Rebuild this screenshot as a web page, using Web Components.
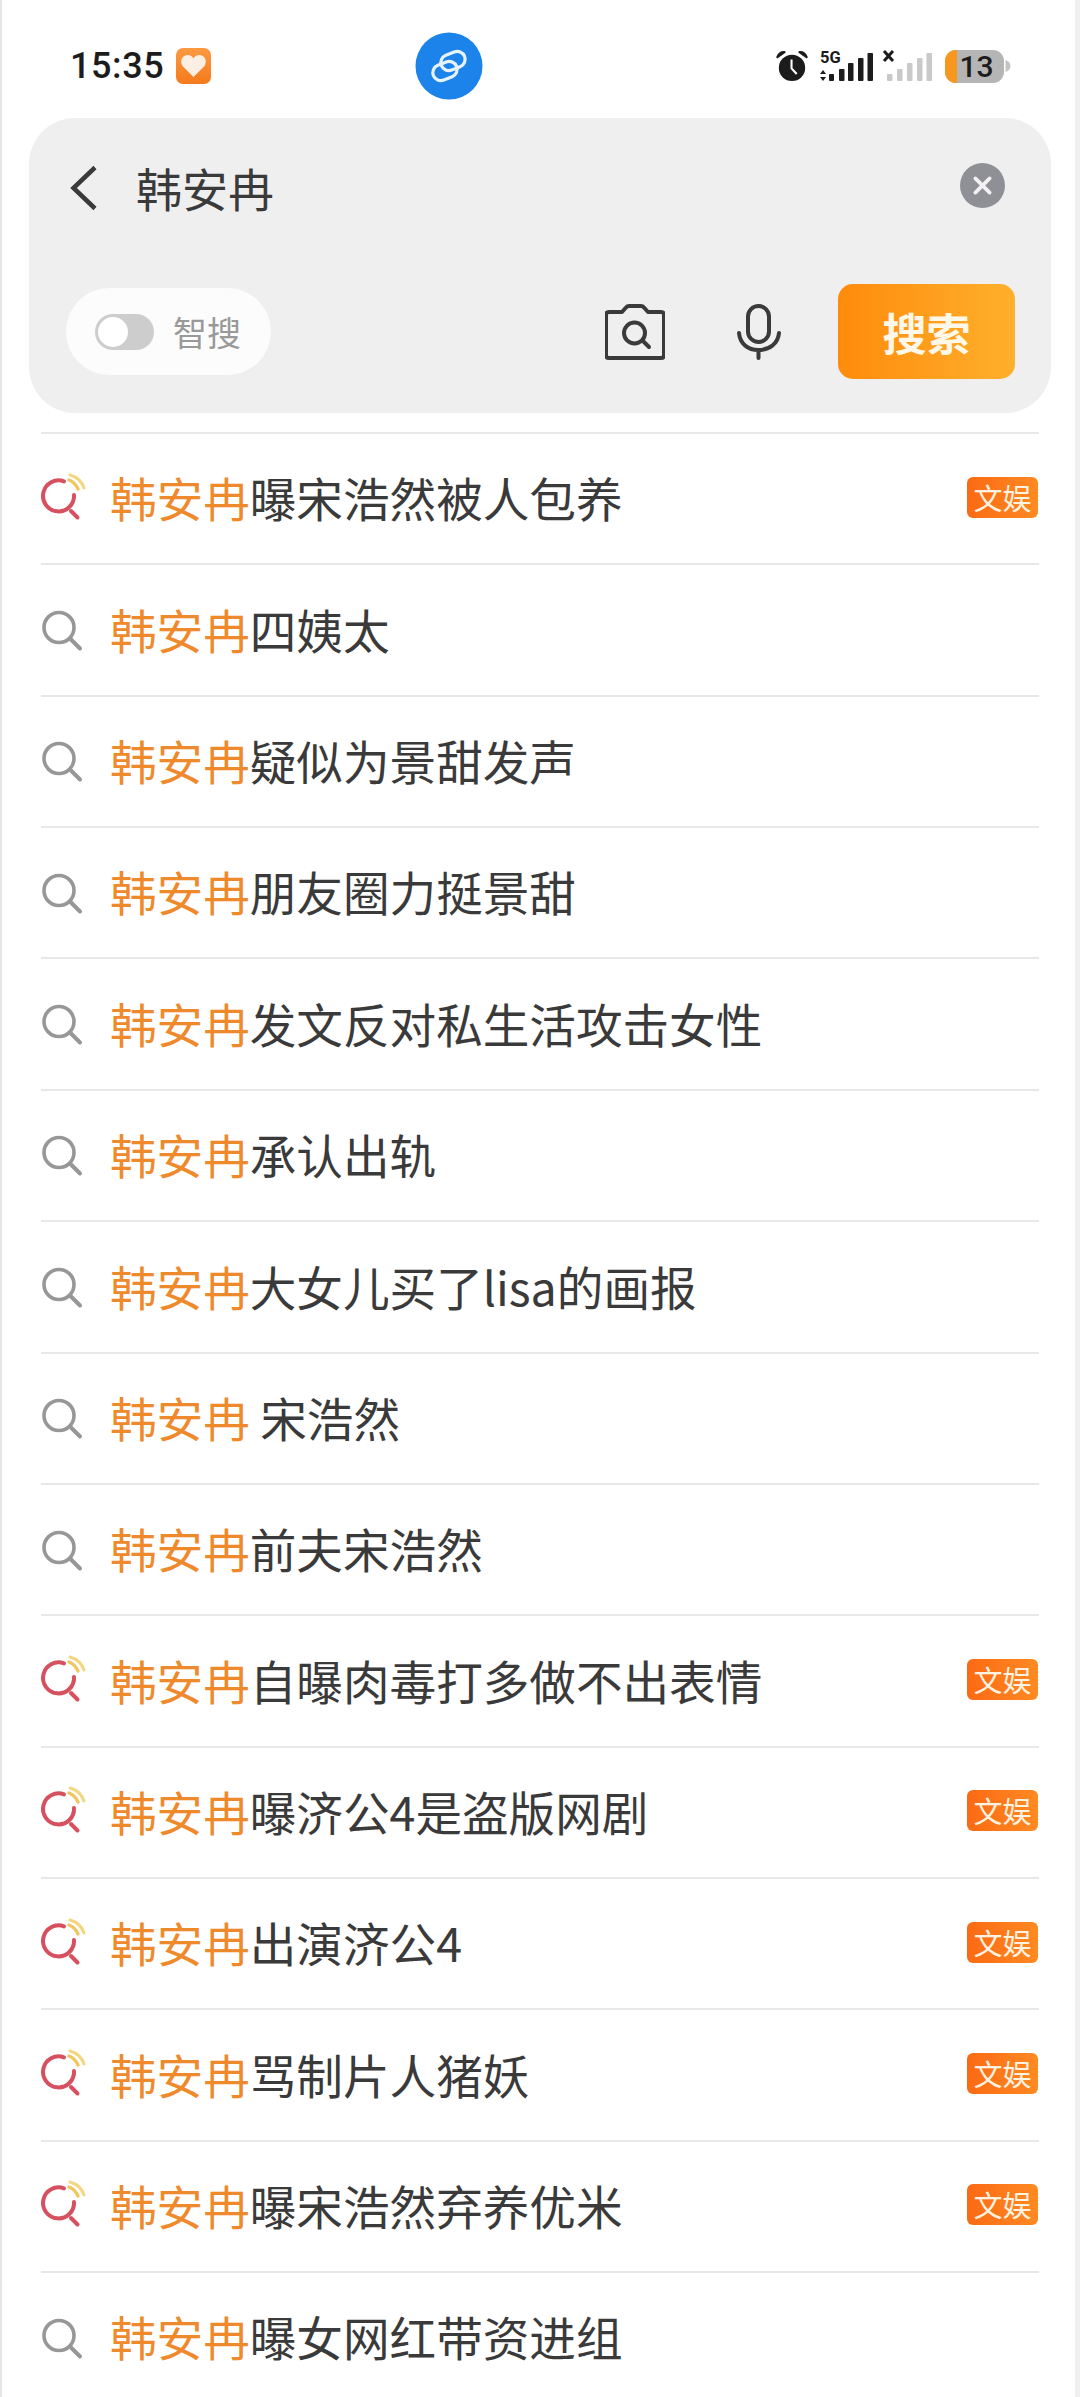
<!DOCTYPE html>
<html><head><meta charset="utf-8">
<style>
html,body{margin:0;padding:0;background:#fff}
body{width:1080px;height:2397px;overflow:hidden;font-family:"Noto Sans CJK SC","Noto Sans",sans-serif;box-sizing:border-box;border-left:2px solid #e6e6e6;border-right:5px solid #f0f0f0;}
</style></head><body>
<template id="t-status"><style>
:host{display:flex;align-items:center;height:118px;box-sizing:border-box;padding:14px 0 0 68px;color:#1c1c1c}
.time{font:500 36px/1 Roboto,"Noto Sans",sans-serif;letter-spacing:.6px}
.left{display:flex;align-items:center;gap:12px;width:345px}
.center{display:flex}
.right{margin-left:auto;display:flex;align-items:center;margin-right:64px}
.bat{position:relative;width:59px;height:33px;border-radius:11px;background:#b5b5b5;display:flex;align-items:center;justify-content:center;font:500 30px/33px Roboto,sans-serif;margin-left:13px}
.bat i{position:absolute;left:0;top:0;bottom:0;width:12px;background:#f7971e;border-radius:11px 0 0 11px}
.bat span{position:relative;margin-left:4px}
svg{display:block}
</style>
<div class="left"><span class="time">15:35</span>
<svg width="36" height="36" viewBox="0 0 36 36"><defs><linearGradient id="h" x1="0" y1="0" x2="0" y2="1"><stop offset="0" stop-color="#fc9a42"/><stop offset="1" stop-color="#f47a1c"/></linearGradient></defs><rect width="35" height="36" rx="7" fill="url(#h)"/><path d="M17.500 29 6.500 18C3 12 7 7 11.500 7c3 0 5 1.500 6 3.500C18.500 8.500 20.500 7 23.500 7c4.500 0 8.500 5 5 11Z" fill="#fbeee3"/></svg></div>
<div class="center"><svg width="68" height="68" viewBox="0 0 68 68"><circle cx="34" cy="34" r="33.500" fill="#1b83ea"/><g fill="none" stroke="#e6f2fd" stroke-width="3.200"><rect x="17.500" y="31" width="25" height="16" rx="8" transform="rotate(-22 30 39)"/><rect x="25.500" y="21" width="25" height="16" rx="8" transform="rotate(-22 38 29)"/></g></svg></div>
<div class="right">
<svg width="32" height="32" viewBox="0 0 34 34" fill="#1c1c1c"><circle cx="17" cy="19" r="14"/><path d="M1.500 7.500C3 3.500 6 2 9 2.200ZM32.500 7.500C31 3.500 28 2 25 2.200Z" stroke="#1c1c1c" stroke-width="2.400" stroke-linejoin="round"/><path d="M16.500 10v9.500l5.500 6" fill="none" stroke="#fff" stroke-width="2.200"/></svg>
<svg width="54" height="34" viewBox="0 0 54 34" style="margin-left:12px" fill="#1c1c1c"><text x="0" y="14" font-family="Roboto,sans-serif" font-size="16.500" font-weight="700" fill="#1c1c1c">5G</text><path d="M3 21l3 4H0ZM3 32l3-4H0Z"/><rect x="9" y="25" width="5" height="7" rx="1"/><rect x="19" y="20" width="5.500" height="12" rx="1"/><rect x="28" y="14" width="5.500" height="18" rx="1"/><rect x="38" y="9" width="5.500" height="23" rx="1"/><rect x="47.500" y="4" width="5.500" height="28" rx="1"/></svg>
<svg width="51" height="34" viewBox="0 0 51 34" style="margin-left:7px"><path d="M3 2l9 10M12 2 3 12" stroke="#1c1c1c" stroke-width="3" fill="none"/><g fill="#c9c9c9"><rect x="6" y="25" width="5.500" height="7" rx="1"/><rect x="16" y="20" width="5.500" height="12" rx="1"/><rect x="26" y="14" width="5.500" height="18" rx="1"/><rect x="36" y="9" width="5.500" height="23" rx="1"/><rect x="45.500" y="4" width="5.500" height="28" rx="1"/></g></svg>
<div class="bat"><i></i><span>13</span></div>
<svg width="6" height="12" viewBox="0 0 5 12" style="margin-left:1px"><path d="M0 0c3 1 5 3 5 6s-2 5-5 6Z" fill="#c4c4c4"/></svg>
</div></template>

<template id="t-box"><style>
:host{display:block;margin:0 24px 0 27px;height:295px;background:#efefef;border-radius:46px;box-sizing:border-box;padding:0 36px 0 37px;color:#3a3a3a}
.top{display:flex;align-items:center;height:134px;padding-right:10px}
.q{font-size:46px;line-height:1;margin-left:37.500px;flex:1;color:#3a3a3a;position:relative;top:2px}
.back{margin-left:2.500px;flex:none;position:relative;top:3px}
.bot{display:flex;align-items:center;height:95px;margin-top:32px}
.pill{display:flex;align-items:center;width:205px;height:87px;border-radius:44px;background:#fcfcfc;box-sizing:border-box;padding-left:29px}
.tog{width:59px;height:36px;border-radius:18px;background:#cdcdcd;position:relative}
.tog::after{content:"";position:absolute;left:3px;top:3px;width:30px;height:30px;border-radius:50%;background:#fff}
.pill span{font-size:34px;line-height:1;color:#999;margin-left:19px}
.cam{margin-left:auto}
.mic{margin-left:72px}
.btn{margin-left:57px;width:177px;height:95px;border-radius:15px;background:linear-gradient(90deg,#ff8b0b,#ffb02d);color:#fff8e8;font-size:44px;font-weight:700;display:flex;align-items:center;justify-content:center;line-height:1}
svg{display:block}
</style>
<div class="top"><svg class="back" width="30" height="46" viewBox="0 0 30 46"><path d="M26 2.500 4.500 23 26 43.500" fill="none" stroke="#3a3a3a" stroke-width="4.500"/></svg><span class="q">韩安冉</span>
<svg width="45" height="45" viewBox="0 0 44 44"><circle cx="22" cy="22" r="22" fill="#8f8f96"/><path d="M15 15l14 14M29 15 15 29" stroke="#f2f2f2" stroke-width="3.600" stroke-linecap="round"/></svg></div>
<div class="bot"><div class="pill"><div class="tog"></div><span>智搜</span></div>
<svg class="cam" width="60" height="56" viewBox="0 0 60 56" fill="none" stroke="#3a3a3a"><path d="M17 8 21 3.500c.8-1 1.500-1.500 3-1.500H36c1.500 0 2.200.5 3 1.500L43 8h13c2 0 3 1 3 3V51c0 2-1 3-3 3H4c-2 0-3-1-3-3V11c0-2 1-3 3-3Z" stroke-width="4" stroke-linejoin="round"/><circle cx="29.500" cy="29" r="10.500" stroke-width="4"/><path d="M38 37l6 6" stroke-width="4" stroke-linecap="round"/></svg>
<svg class="mic" width="44" height="56" viewBox="0 0 44 56" fill="none" stroke="#3a3a3a" stroke-width="4" stroke-linecap="round"><rect x="11" y="2" width="21" height="36" rx="10.500"/><path d="M2 29c1 11 9 17 19.500 17S41 40 42 29M21.500 46v8"/></svg>
<div class="btn">搜索</div></div></template>

<template id="t-row"><style>
:host{display:flex;align-items:center;height:131.360px;box-sizing:border-box;border-top:2px solid #e8e8e8;margin:0 36px 0 39px;font-size:46.600px;color:#3a3a3a}
.ic{flex:none;width:42px;height:42px;margin-right:27px;display:block;overflow:visible}
.t{flex:1;white-space:pre;line-height:1;margin-top:-2px}
.t b{font-weight:400;color:#ef8a2c}
.tag{flex:none;display:none;width:71px;height:41px;border-radius:6px;background:linear-gradient(90deg,#fb6a14,#ff8a22);color:#fff2e0;font-size:29px;line-height:41px;text-align:center;margin:-3px 1px 0 0}
:host([hot]) .tag{display:block}
</style>
<svg class="ic" viewBox="0 0 42 42" id="ic"></svg><span class="t"><b>韩安冉</b><slot></slot></span><span class="tag">文娱</span></template>

<template id="t-list"><style>:host{display:block;margin-top:19px}</style><slot></slot></template>

<app-status></app-status>
<search-box></search-box>
<result-list>
<result-row hot>曝宋浩然被人包养</result-row>
<result-row>四姨太</result-row>
<result-row>疑似为景甜发声</result-row>
<result-row>朋友圈力挺景甜</result-row>
<result-row>发文反对私生活攻击女性</result-row>
<result-row>承认出轨</result-row>
<result-row>大女儿买了lisa的画报</result-row>
<result-row> 宋浩然</result-row>
<result-row>前夫宋浩然</result-row>
<result-row hot>自曝肉毒打多做不出表情</result-row>
<result-row hot>曝济公4是盗版网剧</result-row>
<result-row hot>出演济公4</result-row>
<result-row hot>骂制片人猪妖</result-row>
<result-row hot>曝宋浩然弃养优米</result-row>
<result-row>曝女网红带资进组</result-row>
</result-list>
<script>
function def(name,tid,init){customElements.define(name,class extends HTMLElement{constructor(){super();const r=this.attachShadow({mode:'open'});r.appendChild(document.getElementById(tid).content.cloneNode(true));if(init)init(this,r);}});}
def('app-status','t-status');
def('search-box','t-box');
def('result-list','t-list');
def('result-row','t-row',(el,r)=>{
 const hot=el.hasAttribute('hot');
 r.getElementById('ic').innerHTML=hot
 ?'<path d="M23 3.400A15.500 15.500 0 1 0 33 17" fill="none" stroke="#d6505f" stroke-width="4" stroke-linecap="round"/><path d="M30 33l6.500 6.500" stroke="#d6505f" stroke-width="4" stroke-linecap="round"/><path d="M29 -3C36 -1 41 4 43 10" fill="none" stroke="#f2d680" stroke-width="3" stroke-linecap="round"/><path d="M28 2C32 3.500 35 6.500 37 11" fill="none" stroke="#efc75e" stroke-width="3.400" stroke-linecap="round"/>'
 :'<circle cx="18" cy="18.500" r="15" fill="none" stroke="#979797" stroke-width="3.600"/><path d="M29.500 30l9.500 9.500" stroke="#979797" stroke-width="4" stroke-linecap="round"/>';
});
</script>
</body></html>
